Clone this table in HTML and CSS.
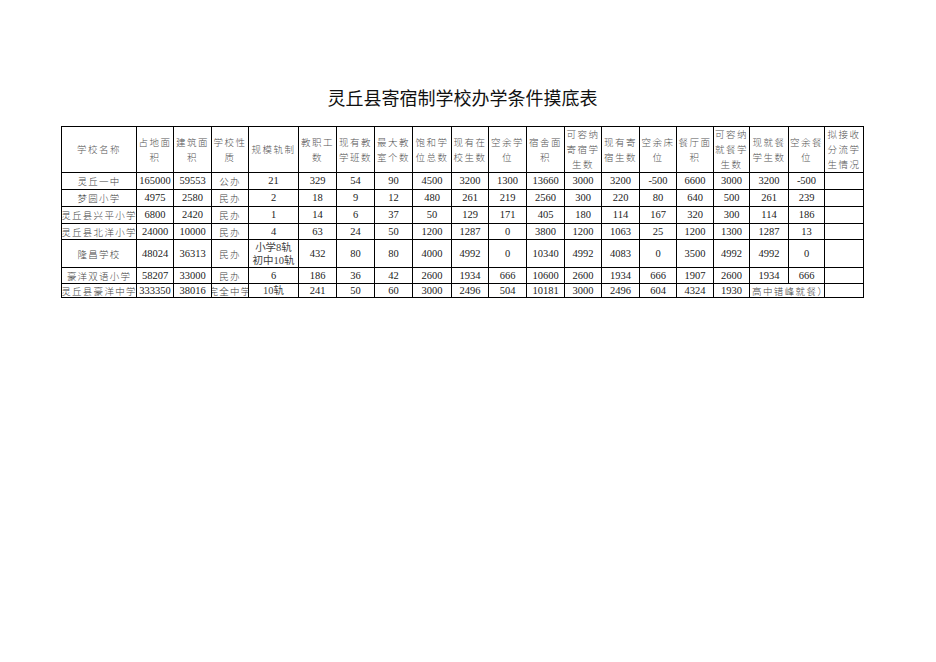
FILE: index.html
```html
<!DOCTYPE html>
<html lang="zh-CN">
<head>
<meta charset="utf-8">
<title>灵丘县寄宿制学校办学条件摸底表</title>
<link rel="stylesheet" href="styles.css">
</head>
<body>
<div class="sheet">
  <h1 class="title">灵丘县寄宿制学校办学条件摸底表</h1>
  <table class="grid">
    <colgroup>
      <col style="width:75px"><col style="width:37px"><col style="width:38px"><col style="width:37px"><col style="width:50px">
      <col style="width:38px"><col style="width:38px"><col style="width:38px"><col style="width:39px"><col style="width:37px">
      <col style="width:38px"><col style="width:38px"><col style="width:37px"><col style="width:38px"><col style="width:37px">
      <col style="width:37px"><col style="width:36px"><col style="width:39px"><col style="width:36px"><col style="width:39px">
    </colgroup>
    <thead>
      <tr class="head">
        <th>学校名称</th>
        <th>占地面<br>积</th>
        <th>建筑面<br>积</th>
        <th>学校性<br>质</th>
        <th>规模轨制</th>
        <th>教职工<br>数</th>
        <th>现有教<br>学班数</th>
        <th>最大教<br>室个数</th>
        <th>饱和学<br>位总数</th>
        <th>现有在<br>校生数</th>
        <th>空余学<br>位</th>
        <th>宿舍面<br>积</th>
        <th>可容纳<br>寄宿学<br>生数</th>
        <th>现有寄<br>宿生数</th>
        <th>空余床<br>位</th>
        <th>餐厅面<br>积</th>
        <th>可容纳<br>就餐学<br>生数</th>
        <th>现就餐<br>学生数</th>
        <th>空余餐<br>位</th>
        <th class="top">拟接收<br>分流学<br>生情况</th>
      </tr>
    </thead>
    <tbody>
      <tr class="r17">
        <td class="cj">灵丘一中</td><td>165000</td><td>59553</td><td class="cj">公办</td><td>21</td>
        <td>329</td><td>54</td><td>90</td><td>4500</td><td>3200</td>
        <td>1300</td><td>13660</td><td>3000</td><td>3200</td><td>-500</td>
        <td>6600</td><td>3000</td><td>3200</td><td>-500</td><td></td>
      </tr>
      <tr class="r17">
        <td class="cj">梦圆小学</td><td>4975</td><td>2580</td><td class="cj">民办</td><td>2</td>
        <td>18</td><td>9</td><td>12</td><td>480</td><td>261</td>
        <td>219</td><td>2560</td><td>300</td><td>220</td><td>80</td>
        <td>640</td><td>500</td><td>261</td><td>239</td><td></td>
      </tr>
      <tr class="r17">
        <td class="cj clip"><div class="fit">灵丘县兴平小学</div></td><td>6800</td><td>2420</td><td class="cj">民办</td><td>1</td>
        <td>14</td><td>6</td><td>37</td><td>50</td><td>129</td>
        <td>171</td><td>405</td><td>180</td><td>114</td><td>167</td>
        <td>320</td><td>300</td><td>114</td><td>186</td><td></td>
      </tr>
      <tr class="r16">
        <td class="cj clip"><div class="fit">灵丘县北洋小学</div></td><td>24000</td><td>10000</td><td class="cj">民办</td><td>4</td>
        <td>63</td><td>24</td><td>50</td><td>1200</td><td>1287</td>
        <td>0</td><td>3800</td><td>1200</td><td>1063</td><td>25</td>
        <td>1200</td><td>1300</td><td>1287</td><td>13</td><td></td>
      </tr>
      <tr class="r28">
        <td class="cj">隆昌学校</td><td>48024</td><td>36313</td><td class="cj">民办</td><td class="two">小学8轨<br>初中10轨</td>
        <td>432</td><td>80</td><td>80</td><td>4000</td><td>4992</td>
        <td>0</td><td>10340</td><td>4992</td><td>4083</td><td>0</td>
        <td>3500</td><td>4992</td><td>4992</td><td>0</td><td></td>
      </tr>
      <tr class="r16">
        <td class="cj">豪洋双语小学</td><td>58207</td><td>33000</td><td class="cj">民办</td><td>6</td>
        <td>186</td><td>36</td><td>42</td><td>2600</td><td>1934</td>
        <td>666</td><td>10600</td><td>2600</td><td>1934</td><td>666</td>
        <td>1907</td><td>2600</td><td>1934</td><td>666</td><td></td>
      </tr>
      <tr class="r13">
        <td class="cj clip"><div class="fit">灵丘县豪洋中学</div></td><td>333350</td><td>38016</td><td class="cj clip"><div class="fit">完全中学</div></td><td class="two">10轨</td>
        <td>241</td><td>50</td><td>60</td><td>3000</td><td>2496</td>
        <td>504</td><td>10181</td><td>3000</td><td>2496</td><td>604</td>
        <td>4324</td><td>1930</td><td class="cj left" colspan="2">高中错峰就餐）</td><td></td>
      </tr>
    </tbody>
  </table>
</div>
</body>
</html>
```
FILE: styles.css
```css
html, body {
  margin: 0;
  padding: 0;
  background: #ffffff;
}

.sheet {
  width: 936px;
  height: 662px;
  padding: 85px 0 0 61px;
  box-sizing: border-box;
}

.title {
  width: 803px;
  margin: 0 0 17px 0;
  text-align: center;
  font-family: "Noto Sans CJK SC", "Noto Sans", sans-serif;
  font-size: 18px;
  font-weight: 400;
  line-height: 24px;
  color: #111;
  letter-spacing: 0;
}

.grid {
  border-collapse: collapse;
  table-layout: fixed;
  width: 803px;
  font-family: "Liberation Serif", "Noto Sans CJK SC", serif;
  font-size: 10.5px;
  color: #222;
}

.grid th,
.grid td {
  border: 1px solid #000;
  padding: 0;
  text-align: center;
  vertical-align: middle;
  white-space: nowrap;
  overflow: visible;
}

.grid th {
  font-family: "Noto Sans CJK SC", sans-serif;
  font-weight: 300;
  font-size: 9.5px;
  letter-spacing: 1.5px;
  line-height: 15px;
  color: #555;
}

.grid th.top {
  vertical-align: top;
}

.head {
  height: 45px;
}

.grid td {
  line-height: 12px;
}

.grid td.cj {
  font-family: "Noto Sans CJK SC", sans-serif;
  font-weight: 300;
  font-size: 9.5px;
  letter-spacing: 1.2px;
  color: #444;
}

.grid td.clip {
  overflow: hidden;
  letter-spacing: 1.3px;
}

.fit {
  display: flex;
  justify-content: center;
}

.grid td.two {
  font-family: "Liberation Serif", "Noto Sans CJK SC", sans-serif;
  line-height: 13px;
  color: #444;
}

.grid td.left {
  text-align: left;
  padding-left: 2px;
  letter-spacing: 1.4px;
}

.r17 { height: 17px; }
.r16 { height: 16px; }
.r28 { height: 28px; }
.r13 { height: 13px; }
```
